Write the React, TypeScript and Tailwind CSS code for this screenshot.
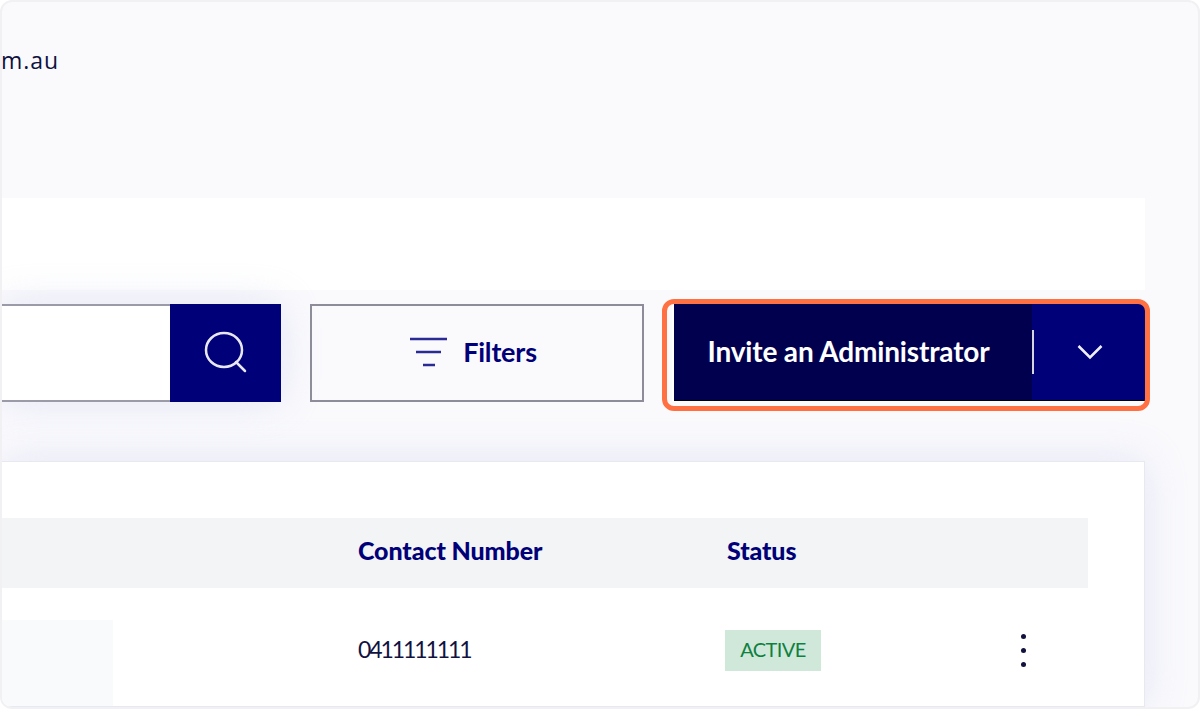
import React from 'react'

function SearchIcon() {
    return (
        <svg width="46" height="46" viewBox="0 0 46 46" fill="none" stroke="#e8e8f4" strokeWidth="2.5">
            <ellipse cx="21" cy="20" rx="18" ry="17" />
            <path d="M33 32 L42 41" strokeLinecap="round" />
        </svg>
    )
}

function FilterIcon() {
    return (
        <svg width="37" height="30" viewBox="0 0 37 30" fill="none" stroke="#2a2a94" strokeWidth="2.5">
            <path d="M0 2 H37" />
            <path d="M6 15 H31" />
            <path d="M13 28 H25" />
        </svg>
    )
}

export default function App() {
    return (
        <div className="h-[709px] w-[1200px] overflow-hidden bg-white font-['Lato',sans-serif]">
            <div className="flex h-full flex-col overflow-hidden rounded-[12px] border-2 border-[#f1f1f4] bg-[#fafafd]">
                <p className="mt-[46px] h-6 shrink-0 font-['Open_Sans',sans-serif] text-[23px] leading-6 font-medium tracking-[1px] text-[#0f1140]">
                    <span className="-ml-[1px]">m.au</span>
                </p>

                <div className="mt-[126px] h-[92px] w-[1143px] shrink-0 bg-white"></div>

                <div className="relative mt-[14px] flex h-[98px] w-[1143px] shrink-0 items-stretch">
                    <div className="flex w-[279px] shadow-[0_0_40px_rgba(200,204,232,0.45)]">
                        <div className="flex-1 border-y-2 border-[#9a9aa8] bg-white"></div>
                        <button className="flex w-[111px] items-center justify-center bg-[#000078]">
                            <SearchIcon />
                        </button>
                    </div>
                    <button className="ml-[29px] flex w-[334px] items-center justify-center gap-[16px] border-2 border-[#8d8d99] pr-[7px] pb-[2px] text-[27px] font-bold text-[#000078]">
                        <FilterIcon />
                        <span className="tracking-[-0.2px]">Filters</span>
                    </button>
                    <div className="ml-[28px] flex flex-1 border-l-2 border-white">
                        <div className="flex h-[97px] w-full border-b border-black">
                            <button className="w-[358px] bg-[#00004f] pr-[9px] pb-[3px] text-[28px] font-bold tracking-[-0.16px] text-white">Invite an Administrator</button>
                            <div className="flex flex-1 items-center bg-[#000078]">
                                <div className="h-[44px] w-[2px] bg-[#d4d4de]"></div>
                                <svg className="ml-[43px]" width="26" height="16" viewBox="0 0 26 16" fill="none" stroke="#f0f0f8" strokeWidth="2.5">
                                    <path d="M1.5 2 L13 13.5 L24.5 2" />
                                </svg>
                            </div>
                        </div>
                    </div>
                    <div className="absolute -top-[5px] left-[660px] h-[112px] w-[488px] rounded-[12px] border-[5px] border-[#ff7043]"></div>
                </div>

                <div className="mt-[59px] min-h-0 w-[1143px] flex-1 border-y border-r border-[#e8e8f0] bg-white pt-[56px] shadow-[0_0_40px_rgba(200,204,232,0.45)]">
                    <div className="flex h-[70px] w-[1086px] items-center bg-[#f3f4f6] pb-[4px] text-[25px] font-black tracking-[-0.1px] text-[#000078]">
                        <span className="ml-[356px] w-[369px]">Contact Number</span>
                        <span>Status</span>
                    </div>
                    <div className="flex h-[118px] items-start">
                        <div className="mt-[32px] h-[86px] w-[111px] bg-[#f9fafb]"></div>
                        <span className="mt-[46px] ml-[245px] w-[367px] text-[23px] leading-[30px] tracking-[-2.1px] text-[#12123f]">0411111111</span>
                        <span className="mt-[42px] flex h-[41px] w-[96px] items-center justify-center bg-[#d0e8da] pb-[4px] text-[20px] tracking-[-0.6px] text-[#0e8040]">ACTIVE</span>
                        <div className="mt-[46px] ml-[200px] flex flex-col gap-[9px]">
                            <span className="size-[5px] rounded-full bg-[#12123f]"></span>
                            <span className="size-[5px] rounded-full bg-[#12123f]"></span>
                            <span className="size-[5px] rounded-full bg-[#12123f]"></span>
                        </div>
                    </div>
                </div>
            </div>
        </div>
    )
}
